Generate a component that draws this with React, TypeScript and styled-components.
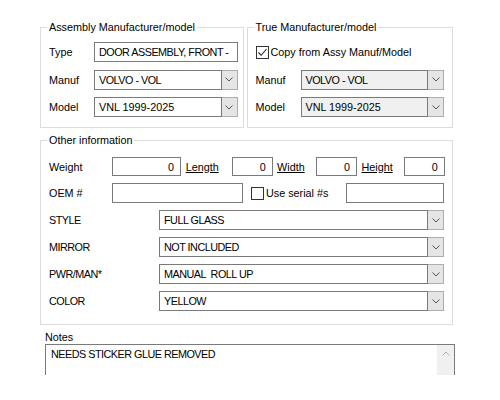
import React from "react";
import styled, { createGlobalStyle } from "styled-components";

const GlobalStyle = createGlobalStyle`
  body {
    margin: 0;
    background: #ffffff;
  }
  * {
    box-sizing: border-box;
  }
`;

const Page = styled.div`
  width: 500px;
  height: 375px;
  overflow: hidden;
  padding: 20px 0 0 40px;
  font-family: "Liberation Sans", Arial, sans-serif;
  font-size: 10.8px;
  color: #000;
`;

const TopRow = styled.div`
  display: flex;
  gap: 3px;
  width: 413px;
`;

const GroupBox = styled.fieldset<{ $width: number; $top?: number }>`
  margin: ${(p) => p.$top || 0}px 0 0 0;
  padding: 0;
  min-width: 0;
  width: ${(p) => p.$width}px;
  border: 1px solid #dcdcdc;
`;

const Legend = styled.legend`
  margin-left: 6px;
  padding: 0 2px;
  line-height: 14px;
`;

const GroupBody = styled.div<{ $pad: string; $gap: number }>`
  display: flex;
  flex-direction: column;
  gap: ${(p) => p.$gap}px;
  padding: ${(p) => p.$pad};
`;

const Row = styled.div<{ $h?: number }>`
  display: flex;
  align-items: center;
  height: ${(p) => p.$h || 20}px;
`;

const Label = styled.span<{ $w: number; $pad?: number; $link?: boolean }>`
  flex: none;
  width: ${(p) => p.$w}px;
  padding-left: ${(p) => p.$pad || 0}px;
  text-decoration: ${(p) => (p.$link ? "underline" : "none")};
  white-space: nowrap;
`;

const Caps = styled.span`
  letter-spacing: -0.5px;
`;

const TextBox = styled.div<{ $w?: number; $right?: boolean; $disabled?: boolean }>`
  display: flex;
  align-items: center;
  justify-content: ${(p) => (p.$right ? "flex-end" : "flex-start")};
  flex: ${(p) => (p.$w ? "none" : "1")};
  width: ${(p) => (p.$w ? `${p.$w}px` : "auto")};
  height: 100%;
  padding: ${(p) => (p.$right ? "0 6px 0 0" : "0 0 0 4px")};
  border: 1px solid #7a7a7a;
  background: ${(p) => (p.$disabled ? "#f0f0f0" : "#ffffff")};
  white-space: pre;
  overflow: hidden;
`;

const Combo = styled.div`
  display: flex;
  flex: 1;
  height: 100%;
`;

const ComboButton = styled.div`
  display: flex;
  align-items: center;
  justify-content: center;
  flex: none;
  width: 16px;
  height: 100%;
  background: #e5e5e5;
  border: 1px solid #adadad;
  border-left: none;
`;

const CheckBox = styled.span<{ $gapLeft?: number }>`
  display: inline-flex;
  align-items: center;
  justify-content: center;
  flex: none;
  width: 13px;
  height: 13px;
  margin-left: ${(p) => p.$gapLeft || 0}px;
  margin-right: 2px;
  border: 1px solid #333333;
  background: #ffffff;
`;

const Spacer = styled.div`
  flex: 1;
`;

const NotesLabel = styled.div`
  margin: 6px 0 0 5px;
  line-height: 13px;
`;

const NotesBox = styled.div`
  display: flex;
  width: 410px;
  height: 80px;
  margin-left: 5px;
  border: 1px solid #7a7a7a;
`;

const NotesText = styled.div`
  flex: 1;
  padding: 3px 0 0 5px;
`;

const ScrollBar = styled.div`
  width: 17px;
  background: #f0f0f0;
`;

const ScrollArrow = styled.div`
  display: flex;
  align-items: center;
  justify-content: center;
  height: 17px;
`;

const Chevron = ({ up, color = "#555" }: { up?: boolean; color?: string }) => (
  <svg width="8" height="5" viewBox="0 0 8 5">
    <path
      d={up ? "M0.5 4.5 L4 1 L7.5 4.5" : "M0.5 0.5 L4 4 L7.5 0.5"}
      fill="none"
      stroke={color}
      strokeWidth="1"
    />
  </svg>
);

const Tick = () => (
  <svg width="11" height="11" viewBox="0 0 11 11">
    <path d="M1.5 5.5 L4.2 8.3 L9.5 2" fill="none" stroke="#222" strokeWidth="1.1" />
  </svg>
);

function ComboBox({ value, disabled }: { value: React.ReactNode; disabled?: boolean }) {
  return (
    <Combo>
      <TextBox $disabled={disabled}>{value}</TextBox>
      <ComboButton>
        <Chevron />
      </ComboButton>
    </Combo>
  );
}

const attributes = [
  { name: "STYLE", value: "FULL GLASS" },
  { name: "MIRROR", value: "NOT INCLUDED" },
  { name: "PWR/MAN*", value: "MANUAL  ROLL UP" },
  { name: "COLOR", value: "YELLOW" },
];

export default function App() {
  return (
    <Page>
      <GlobalStyle />
      <TopRow>
        <GroupBox $width={204}>
          <Legend>Assembly Manufacturer/model</Legend>
          <GroupBody $pad="8px 5px 10px 8px" $gap={7.5}>
            <Row>
              <Label $w={45}>Type</Label>
              <TextBox>
                <Caps>DOOR ASSEMBLY, FRONT -</Caps>
              </TextBox>
            </Row>
            <Row>
              <Label $w={45}>Manuf</Label>
              <ComboBox value={<Caps>VOLVO - VOL</Caps>} />
            </Row>
            <Row>
              <Label $w={45}>Model</Label>
              <ComboBox value="VNL 1999-2025" />
            </Row>
          </GroupBody>
        </GroupBox>
        <GroupBox $width={207}>
          <Legend>True Manufacturer/model</Legend>
          <GroupBody $pad="8px 8px 10px 8px" $gap={7.5}>
            <Row>
              <CheckBox>
                <Tick />
              </CheckBox>
              <span>Copy from Assy Manuf/Model</span>
            </Row>
            <Row>
              <Label $w={45}>Manuf</Label>
              <ComboBox value={<Caps>VOLVO - VOL</Caps>} disabled />
            </Row>
            <Row>
              <Label $w={45}>Model</Label>
              <ComboBox value="VNL 1999-2025" disabled />
            </Row>
          </GroupBody>
        </GroupBox>
      </TopRow>

      <GroupBox $width={413} $top={5}>
        <Legend>Other information</Legend>
        <GroupBody $pad="10px 8px 13px 8px" $gap={7}>
          <Row $h={19}>
            <Label $w={63}>Weight</Label>
            <TextBox $w={69} $right>0</TextBox>
            <Label $w={50.7} $pad={4.7} $link>Length</Label>
            <TextBox $w={41} $right>0</TextBox>
            <Label $w={43.4} $pad={4.4} $link>Width</Label>
            <TextBox $w={41} $right>0</TextBox>
            <Label $w={46.6} $pad={4.4} $link>Height</Label>
            <TextBox $w={41} $right>0</TextBox>
          </Row>
          <Row>
            <Label $w={63}>OEM #</Label>
            <TextBox $w={131} />
            <CheckBox $gapLeft={8} />
            <span>Use serial #s</span>
            <Spacer />
            <TextBox $w={98} />
          </Row>
          {attributes.map((a) => (
            <Row key={a.name}>
              <Label $w={110}>
                <Caps>{a.name}</Caps>
              </Label>
              <ComboBox value={<Caps>{a.value}</Caps>} />
            </Row>
          ))}
        </GroupBody>
      </GroupBox>

      <NotesLabel>Notes</NotesLabel>
      <NotesBox>
        <NotesText>
          <Caps>NEEDS STICKER GLUE REMOVED</Caps>
        </NotesText>
        <ScrollBar>
          <ScrollArrow>
            <Chevron up color="#b0b0b0" />
          </ScrollArrow>
        </ScrollBar>
      </NotesBox>
    </Page>
  );
}
